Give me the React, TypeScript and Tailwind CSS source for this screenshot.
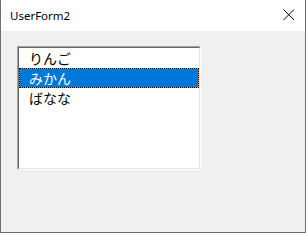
import React from "react";

export default function App() {
  const items = ["りんご", "みかん", "ばなな"];
  return (
    <div className="w-[306px] h-[233px] flex flex-col bg-[#f0f0f0] border-l border-r border-b border-[#6f6f6f]">
      <div className="h-[31px] bg-white flex items-center justify-between pl-[9px] pr-[10px] shrink-0">
        <span
          className="text-[11.5px] text-black leading-none"
          style={{ fontFamily: '"Noto Sans", "Liberation Sans", sans-serif' }}
        >
          UserForm2
        </span>
        <svg width="12" height="12" viewBox="0 0 12 12" className="mb-[2px]">
          <path d="M0.5 0.5 L11 11 M11 0.5 L0.5 11" stroke="#000" strokeWidth="1" />
        </svg>
      </div>
      <div className="flex-1 pt-[15px] pl-[16px]">
        <div className="w-[184px] h-[124px] border-t border-l border-[#a0a0a0] border-r-white border-b-white border-r border-b">
          <div className="w-full h-full border-t border-l border-[#696969] border-r border-b border-r-[#e3e3e3] border-b-[#e3e3e3] bg-white">
            {items.map((t, i) =>
              i === 1 ? (
                <div
                  key={t}
                  className="h-[20px] bg-[#ff8c1a] border border-dotted border-black"
                >
                  <div
                    className="h-full bg-[#0078d7] text-white text-[14px] leading-[18px] pl-[9px]"
                    style={{ fontFamily: '"Noto Sans CJK JP", sans-serif' }}
                  >
                    {t}
                  </div>
                </div>
              ) : (
                <div
                  key={t}
                  className="h-[20px] text-black text-[14px] leading-[20px] pl-[10px]"
                  style={{ fontFamily: '"Noto Sans CJK JP", sans-serif' }}
                >
                  {t}
                </div>
              )
            )}
          </div>
        </div>
      </div>
    </div>
  );
}
